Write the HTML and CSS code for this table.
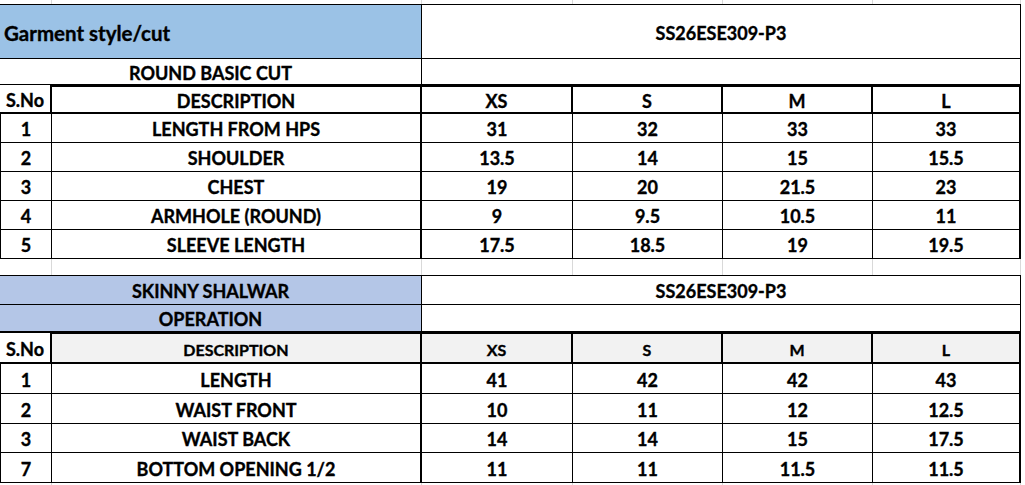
FILE: index.html
```html
<!DOCTYPE html>
<html>
<head>
<meta charset="utf-8">
<link rel="stylesheet" href="styles.css">
</head>
<body>
<div class="sheet">
  <!-- top gridline strip -->
  <div class="g"></div><div class="g"></div><div class="g"></div><div class="g"></div><div class="g"></div><div class="g"></div>

  <!-- table 1 -->
  <div class="c ab blue1 title t1top">Garment style/cut</div>
  <div class="c cf t1top">SS26ESE309-P3</div>

  <div class="c ab">ROUND BASIC CUT</div>
  <div class="c cf"></div>

  <div class="c a hd1a">S.No</div>
  <div class="c hd hd1">DESCRIPTION</div>
  <div class="c hd hd1">XS</div>
  <div class="c hd hd1">S</div>
  <div class="c hd hd1">M</div>
  <div class="c hd hd1 last">L</div>

  <div class="c a d">1</div><div class="c b d">LENGTH FROM HPS</div><div class="c n d">31</div><div class="c n d">32</div><div class="c n d">33</div><div class="c n d last">33</div>
  <div class="c a d">2</div><div class="c b d">SHOULDER</div><div class="c n d">13.5</div><div class="c n d">14</div><div class="c n d">15</div><div class="c n d last">15.5</div>
  <div class="c a d">3</div><div class="c b d">CHEST</div><div class="c n d">19</div><div class="c n d">20</div><div class="c n d">21.5</div><div class="c n d last">23</div>
  <div class="c a d">4</div><div class="c b d">ARMHOLE (ROUND)</div><div class="c n d">9</div><div class="c n d">9.5</div><div class="c n d">10.5</div><div class="c n d last">11</div>
  <div class="c a d">5</div><div class="c b d">SLEEVE LENGTH</div><div class="c n d">17.5</div><div class="c n d">18.5</div><div class="c n d">19</div><div class="c n d last">19.5</div>

  <!-- gap row -->
  <div class="g"></div><div class="g"></div><div class="g"></div><div class="g"></div><div class="g"></div><div class="g"></div>

  <!-- table 2 -->
  <div class="c ab blue2 t2top">SKINNY SHALWAR</div>
  <div class="c cf t2top">SS26ESE309-P3</div>

  <div class="c ab blue2">OPERATION</div>
  <div class="c cf"></div>

  <div class="c a hd2a">S.No</div>
  <div class="c hd hd2 gray">DESCRIPTION</div>
  <div class="c hd hd2 gray">XS</div>
  <div class="c hd hd2 gray">S</div>
  <div class="c hd hd2 gray">M</div>
  <div class="c hd hd2 gray last">L</div>

  <div class="c a d">1</div><div class="c b d">LENGTH</div><div class="c n d">41</div><div class="c n d">42</div><div class="c n d">42</div><div class="c n d last">43</div>
  <div class="c a d">2</div><div class="c b d">WAIST FRONT</div><div class="c n d">10</div><div class="c n d">11</div><div class="c n d">12</div><div class="c n d last">12.5</div>
  <div class="c a d">3</div><div class="c b d">WAIST BACK</div><div class="c n d">14</div><div class="c n d">14</div><div class="c n d">15</div><div class="c n d last">17.5</div>
  <div class="c a d">7</div><div class="c b d">BOTTOM OPENING 1/2</div><div class="c n d">11</div><div class="c n d">11</div><div class="c n d">11.5</div><div class="c n d last">11.5</div>

  <!-- bottom gridline strip -->
  <div class="g"></div><div class="g"></div><div class="g"></div><div class="g"></div><div class="g"></div><div class="g"></div>
</div>
</body>
</html>
```

FILE: styles.css
```css
html, body {
  margin: 0;
  padding: 0;
  background: #ffffff;
}

body {
  font-family: Lato, "Liberation Sans", sans-serif;
  font-weight: 700;
  color: #000;
  overflow: hidden;
}

.sheet {
  display: grid;
  grid-template-columns: 52px 370px 151px 150px 150px 148px;
  grid-template-rows: 4px 55px 26px 29px 29px 29px 29px 29px 29px 16px 30px 27px 32px 30px 30px 29px 30px 4px;
  width: 1021px;
}

.g {
  border-right: 1px solid #d9d9d9;
}

.c {
  box-sizing: border-box;
  display: flex;
  align-items: center;
  justify-content: center;
  font-size: 18px;
  line-height: 1.2;
  padding-top: 4px;
  white-space: nowrap;
  -webkit-text-stroke: 0.35px #000;
  border-bottom: 1px solid #000;
  border-right: 1px solid #000;
}

.ab {
  grid-column: span 2;
}

.cf {
  grid-column: span 4;
}

.t1top, .t2top {
  border-top: 1px solid #000;
}

.title {
  justify-content: flex-start;
  padding-left: 4px;
  padding-top: 3px;
  font-size: 20.5px;
}

.blue1 {
  background: #9bc2e6;
}

.blue2 {
  background: #b4c6e7;
}

.gray {
  background: #f2f2f2;
}

/* header rows */
.hd {
  border-top: 2px solid #000;
  border-bottom: 2px solid #000;
  border-right: 2px solid #000;
}

.hd1a {
  border-bottom: 2px solid #000;
  border-right: 2px solid #000;
}

.hd2a {
  border-top: 1px solid #000;
  border-bottom: 2px solid #000;
  border-right: 2px solid #000;
  font-size: 18px;
}

.hd2 {
  font-size: 16px;
}

/* data rows */
.a.d {
  border-left: 1px solid #000;
}

.b.d {
  border-right: 2px solid #000;
}

.last {
  border-right: 2px solid #000;
}
```
